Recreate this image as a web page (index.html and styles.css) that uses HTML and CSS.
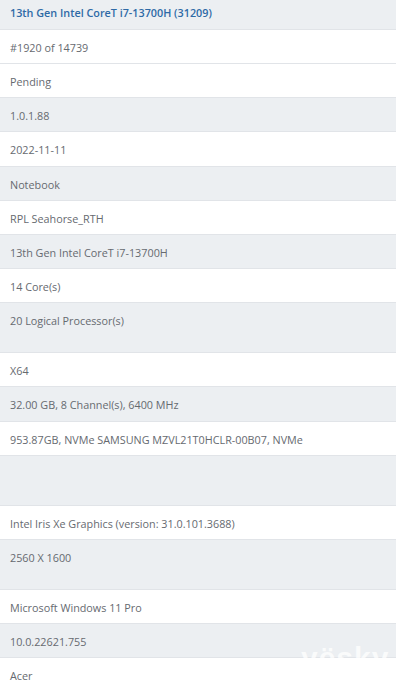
FILE: index.html
```html
<!DOCTYPE html>
<html>
<head>
<meta charset="utf-8">
<link rel="stylesheet" href="styles.css">
</head>
<body>
<div class="page">
  <div class="list">
    <div class="row head">13th Gen Intel CoreT i7-13700H (31209)</div>
    <div class="row">#1920 of 14739</div>
    <div class="row">Pending</div>
    <div class="row alt">1.0.1.88</div>
    <div class="row">2022-11-11</div>
    <div class="row alt">Notebook</div>
    <div class="row">RPL Seahorse_RTH</div>
    <div class="row alt">13th Gen Intel CoreT i7-13700H</div>
    <div class="row">14 Core(s)</div>
    <div class="row alt tall">20 Logical Processor(s)</div>
    <div class="row">X64</div>
    <div class="row alt">32.00 GB, 8 Channel(s), 6400 MHz</div>
    <div class="row">953.87GB, NVMe SAMSUNG MZVL21T0HCLR-00B07, NVMe</div>
    <div class="row alt tall"></div>
    <div class="row">Intel Iris Xe Graphics (version: 31.0.101.3688)</div>
    <div class="row alt tall">2560 X 1600</div>
    <div class="row">Microsoft Windows 11 Pro</div>
    <div class="row alt">10.0.22621.755</div>
    <div class="row">Acer</div>
  </div>
  <div class="watermark">yësky</div>
</div>
</body>
</html>
```
FILE: styles.css
```css
html, body {
  margin: 0;
  padding: 0;
  background: #ffffff;
}
.page {
  position: relative;
  width: 396px;
  height: 692px;
  overflow: hidden;
  font-family: "Open Sans", "Noto Sans", sans-serif;
  font-size: 10.8px;
  color: #666a70;
}
.list {
  display: flex;
  flex-direction: column;
}
.row {
  box-sizing: border-box;
  flex: none;
  height: 34.15px;
  padding: 9px 10px 0 10px;
  line-height: 17px;
  border-bottom: 1px solid #e1e4e8;
  background: #ffffff;
  white-space: nowrap;
}
.row.alt {
  background: #eceff2;
}
.row.tall {
  height: 50.15px;
}
.row.head {
  height: 30px;
  padding-top: 4px;
  background: #eceff2;
  color: #2e6aa6;
  font-weight: 600;
}
.watermark {
  position: absolute;
  left: 301px;
  top: 641px;
  font-family: "Liberation Sans", Arial, sans-serif;
  font-weight: bold;
  font-size: 30px;
  letter-spacing: 1px;
  color: rgba(255, 255, 255, 0.75);
}
```
